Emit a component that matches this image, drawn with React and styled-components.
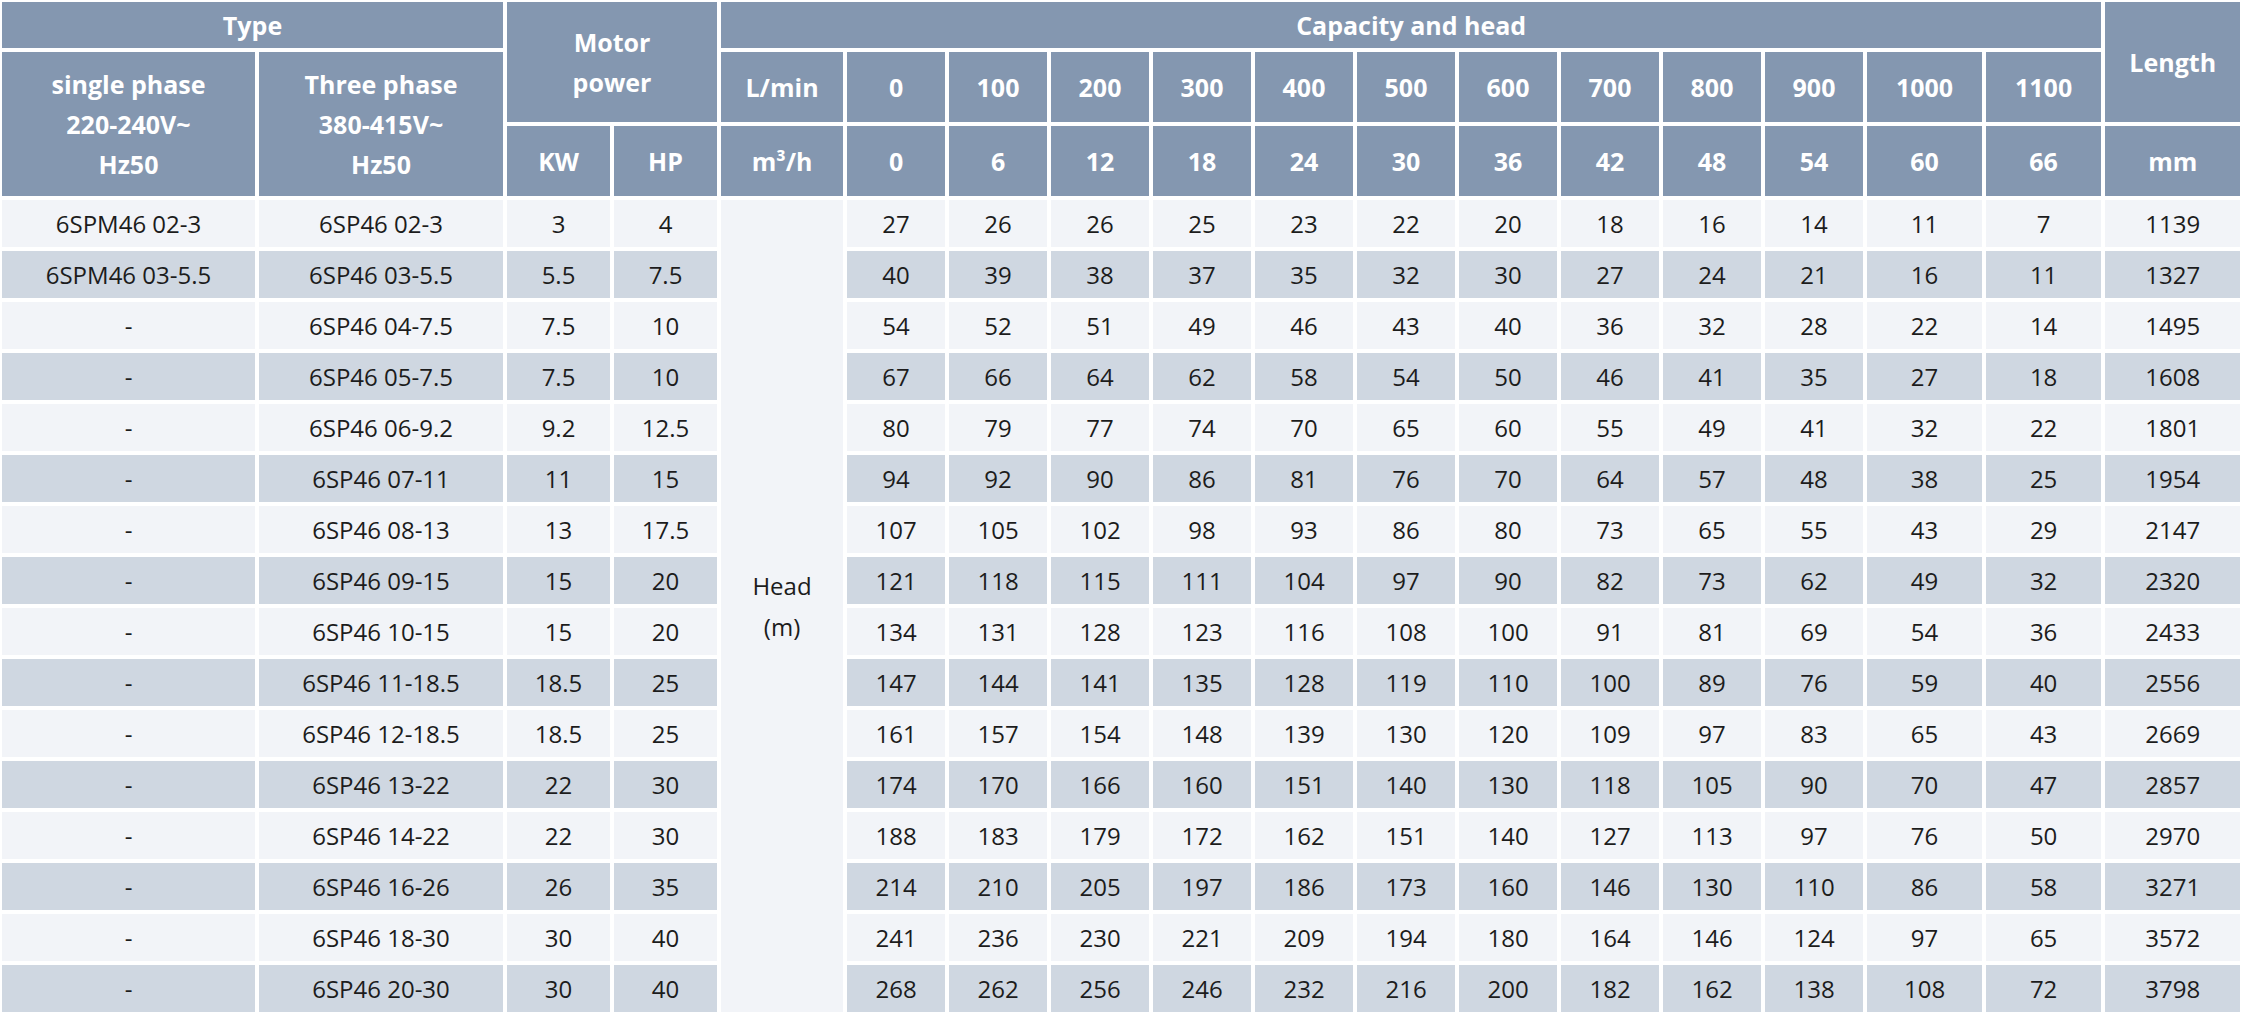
import React from "react";
import styled, { createGlobalStyle } from "styled-components";

const GlobalStyle = createGlobalStyle`
  html, body {
    margin: 0;
    padding: 0;
    background: #fff;
  }
  body {
    font-family: "Open Sans", "Noto Sans", "DejaVu Sans", sans-serif;
  }
`;

const Wrap = styled.div`
  padding: 0;
  background: #fff;
`;

const Table = styled.table`
  margin: -2px 0 0 -2px;
  border-collapse: separate;
  border-spacing: 4px;
  table-layout: fixed;
  width: 2246px;
`;

const HeadCell = styled.th`
  padding: 0;
  height: ${(p) => p.$h || 70}px;
  background: #8497b0;
  color: #fff;
  font-weight: 700;
  font-size: 25px;
  line-height: 40px;
  text-align: center;
  vertical-align: middle;
`;

const Cell = styled.td`
  padding: 0;
  height: 47px;
  background: ${(p) => (p.$dark ? "#cfd7e1" : "#f2f4f8")};
  color: #1c1c1c;
  font-size: 24px;
  text-align: center;
  vertical-align: middle;
  white-space: nowrap;
`;

const HeadNote = styled.td`
  padding: 0;
  background: #f2f4f8;
  color: #1c1c1c;
  font-size: 24px;
  line-height: 41px;
  text-align: center;
  vertical-align: middle;
`;

const widths = [253, 244, 103, 103, 122, 98, 98, 98, 98, 98, 98, 98, 98, 98, 98, 115, 115, 135];

const flows = [0, 100, 200, 300, 400, 500, 600, 700, 800, 900, 1000, 1100];
const cubic = [0, 6, 12, 18, 24, 30, 36, 42, 48, 54, 60, 66];

const rows = [
  ["6SPM46 02-3", "6SP46 02-3", "3", "4", [27, 26, 26, 25, 23, 22, 20, 18, 16, 14, 11, 7], 1139],
  ["6SPM46 03-5.5", "6SP46 03-5.5", "5.5", "7.5", [40, 39, 38, 37, 35, 32, 30, 27, 24, 21, 16, 11], 1327],
  ["-", "6SP46 04-7.5", "7.5", "10", [54, 52, 51, 49, 46, 43, 40, 36, 32, 28, 22, 14], 1495],
  ["-", "6SP46 05-7.5", "7.5", "10", [67, 66, 64, 62, 58, 54, 50, 46, 41, 35, 27, 18], 1608],
  ["-", "6SP46 06-9.2", "9.2", "12.5", [80, 79, 77, 74, 70, 65, 60, 55, 49, 41, 32, 22], 1801],
  ["-", "6SP46 07-11", "11", "15", [94, 92, 90, 86, 81, 76, 70, 64, 57, 48, 38, 25], 1954],
  ["-", "6SP46 08-13", "13", "17.5", [107, 105, 102, 98, 93, 86, 80, 73, 65, 55, 43, 29], 2147],
  ["-", "6SP46 09-15", "15", "20", [121, 118, 115, 111, 104, 97, 90, 82, 73, 62, 49, 32], 2320],
  ["-", "6SP46 10-15", "15", "20", [134, 131, 128, 123, 116, 108, 100, 91, 81, 69, 54, 36], 2433],
  ["-", "6SP46 11-18.5", "18.5", "25", [147, 144, 141, 135, 128, 119, 110, 100, 89, 76, 59, 40], 2556],
  ["-", "6SP46 12-18.5", "18.5", "25", [161, 157, 154, 148, 139, 130, 120, 109, 97, 83, 65, 43], 2669],
  ["-", "6SP46 13-22", "22", "30", [174, 170, 166, 160, 151, 140, 130, 118, 105, 90, 70, 47], 2857],
  ["-", "6SP46 14-22", "22", "30", [188, 183, 179, 172, 162, 151, 140, 127, 113, 97, 76, 50], 2970],
  ["-", "6SP46 16-26", "26", "35", [214, 210, 205, 197, 186, 173, 160, 146, 130, 110, 86, 58], 3271],
  ["-", "6SP46 18-30", "30", "40", [241, 236, 230, 221, 209, 194, 180, 164, 146, 124, 97, 65], 3572],
  ["-", "6SP46 20-30", "30", "40", [268, 262, 256, 246, 232, 216, 200, 182, 162, 138, 108, 72], 3798],
];

function App() {
  return (
    <>
      <GlobalStyle />
      <Wrap>
        <Table>
          <colgroup>
            {widths.map((w, i) => (
              <col key={i} style={{ width: w }} />
            ))}
          </colgroup>
          <thead>
            <tr>
              <HeadCell colSpan={2} $h={46}>Type</HeadCell>
              <HeadCell colSpan={2} rowSpan={2}>
                Motor
                <br />
                power
              </HeadCell>
              <HeadCell colSpan={13} $h={46}>Capacity and head</HeadCell>
              <HeadCell rowSpan={2}>Length</HeadCell>
            </tr>
            <tr>
              <HeadCell rowSpan={2}>
                single phase
                <br />
                220-240V~
                <br />
                Hz50
              </HeadCell>
              <HeadCell rowSpan={2}>
                Three phase
                <br />
                380-415V~
                <br />
                Hz50
              </HeadCell>
              <HeadCell>L/min</HeadCell>
              {flows.map((f) => (
                <HeadCell key={f}>{f}</HeadCell>
              ))}
            </tr>
            <tr>
              <HeadCell>KW</HeadCell>
              <HeadCell>HP</HeadCell>
              <HeadCell>m³/h</HeadCell>
              {cubic.map((c) => (
                <HeadCell key={c}>{c}</HeadCell>
              ))}
              <HeadCell>mm</HeadCell>
            </tr>
          </thead>
          <tbody>
            {rows.map(([single, three, kw, hp, heads, len], i) => {
              const dark = i % 2 === 1;
              return (
                <tr key={three}>
                  <Cell $dark={dark}>{single}</Cell>
                  <Cell $dark={dark}>{three}</Cell>
                  <Cell $dark={dark}>{kw}</Cell>
                  <Cell $dark={dark}>{hp}</Cell>
                  {i === 0 && (
                    <HeadNote rowSpan={rows.length}>
                      Head
                      <br />
                      (m)
                    </HeadNote>
                  )}
                  {heads.map((h, j) => (
                    <Cell key={j} $dark={dark}>{h}</Cell>
                  ))}
                  <Cell $dark={dark}>{len}</Cell>
                </tr>
              );
            })}
          </tbody>
        </Table>
      </Wrap>
    </>
  );
}

export default App;
